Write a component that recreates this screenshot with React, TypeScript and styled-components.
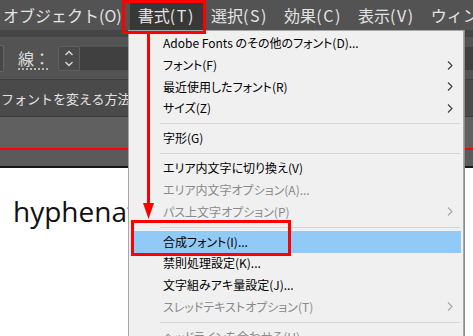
import styled, { createGlobalStyle } from "styled-components";

const GlobalStyle = createGlobalStyle`
  html, body { margin: 0; padding: 0; background: #fff; }
  body { font-family: "Noto Sans CJK JP", "Noto Sans", sans-serif; }
`;

const Screen = styled.div`
  position: relative;
  width: 473px;
  height: 336px;
  overflow: hidden;
  display: flex;
  flex-direction: column;
  background: #fff;
`;

const MenuBar = styled.div`
  display: flex;
  height: 30px;
  flex-shrink: 0;
  background: #535353;
  white-space: nowrap;
`;

const MenuTitle = styled.div<{ $active?: boolean }>`
  padding: 0 8px;
  line-height: 30px;
  font-size: 16px;
  color: #e4e4e4;
  background: ${(p) => (p.$active ? "#383838" : "transparent")};
  &:first-child { padding-left: 3px; }
`;

const AccessKey = styled.span`
  letter-spacing: 1.6px;
`;

const SubStrip = styled.div`
  height: 7px;
  flex-shrink: 0;
  background: #454545;
`;

const ControlBar = styled.div`
  height: 42px;
  flex-shrink: 0;
  display: flex;
  align-items: center;
  background: #535353;
  border-bottom: 1px solid #3e3e3e;
`;

const CutField = styled.div`
  width: 3px;
  height: 25px;
  background: #474747;
  border: 1px solid #666;
  border-left: none;
  border-radius: 0 2px 2px 0;
`;

const StrokeLabel = styled.span`
  margin-left: 14px;
  font-size: 16px;
  line-height: 1;
  color: #dcdcdc;
  text-decoration: underline dotted #cfcfcf;
  text-underline-offset: 4px;
`;

const Spinner = styled.div`
  margin-left: 8px;
  width: 22px;
  height: 25px;
  box-sizing: border-box;
  display: flex;
  align-items: center;
  justify-content: center;
  background: #4a4a4a;
  border: 1px solid #5f5f5f;
  border-radius: 2px;
`;

const Field = styled.div`
  flex: 1;
  height: 23px;
  background: #404040;
`;

const InfoRow = styled.div`
  height: 36px;
  flex-shrink: 0;
  display: flex;
  align-items: center;
  padding-left: 1px;
  background: #4a4a4a;
  border-bottom: 1px solid #3a3a3a;
  font-size: 13px;
  color: #e2e2e2;
  white-space: nowrap;
`;

const TabStrip = styled.div`
  height: 31px;
  flex-shrink: 0;
  background: #606060;
  border-bottom: 2px solid #ff0000;
`;

const TabFoot = styled.div`
  height: 16px;
  flex-shrink: 0;
  background: #5a5a5a;
  border-bottom: 2px solid #161616;
`;

const Canvas = styled.div`
  flex: 1;
  padding: 24px 0 0 13px;
  font-family: "Open Sans", "Noto Sans", sans-serif;
  font-size: 28px;
  color: #111;
`;

const Dropdown = styled.div`
  position: absolute;
  left: 128px;
  top: 30px;
  width: 336px;
  height: 330px;
  box-sizing: border-box;
  padding: 1.5px 2px 0 5px;
  background: #f0f0f0;
  border: 1px solid #a8a8a8;
  box-shadow: 1px 0 0 #8c8c8c;
  font-size: 12px;
  font-feature-settings: "palt" 1;
`;

const Item = styled.div<{ $disabled?: boolean; $hover?: boolean }>`
  height: 21.7px;
  display: flex;
  align-items: center;
  justify-content: space-between;
  padding: 0 8px 0 29px;
  line-height: 1;
  white-space: nowrap;
  color: ${(p) => (p.$disabled ? "#8a8a8a" : "#000")};
  background: ${(p) => (p.$hover ? "#91c9f7" : "transparent")};
`;

const Separator = styled.div`
  height: 1px;
  margin: 4px 1px 3.3px 26px;
  background: #d6d6d6;
`;

const CalloutBox = styled.div<{ $x: number; $y: number; $w: number; $h: number }>`
  position: absolute;
  left: ${(p) => p.$x}px;
  top: ${(p) => p.$y}px;
  width: ${(p) => p.$w}px;
  height: ${(p) => p.$h}px;
  box-sizing: border-box;
  border: 3px solid #ff0000;
`;

const ArrowSvg = styled.svg`
  position: absolute;
  left: 139px;
  top: 33px;
`;

const Chevron = ({ muted }: { muted?: boolean }) => (
  <svg width="6" height="9" viewBox="0 0 6 9">
    <polyline
      points="1,0.5 5,4.5 1,8.5"
      fill="none"
      stroke={muted ? "#a6a6a6" : "#3c3c3c"}
      strokeWidth="1.1"
    />
  </svg>
);

type Entry =
  | { sep: true }
  | { label: string; sub?: boolean; disabled?: boolean; hover?: boolean };

const entries: Entry[] = [
  { label: "Adobe Fonts のその他のフォント(D)..." },
  { label: "フォント(F)", sub: true },
  { label: "最近使用したフォント(R)", sub: true },
  { label: "サイズ(Z)", sub: true },
  { sep: true },
  { label: "字形(G)" },
  { sep: true },
  { label: "エリア内文字に切り換え(V)" },
  { label: "エリア内文字オプション(A)...", disabled: true },
  { label: "パス上文字オプション(P)", sub: true, disabled: true },
  { sep: true },
  { label: "合成フォント(I)...", hover: true },
  { label: "禁則処理設定(K)..." },
  { label: "文字組みアキ量設定(J)..." },
  { label: "スレッドテキストオプション(T)", sub: true, disabled: true },
  { sep: true },
  { label: "ヘッドラインを合わせる(H)", disabled: true },
];

const menus = [
  ["オブジェクト", "(O)"],
  ["書式", "(T)"],
  ["選択", "(S)"],
  ["効果", "(C)"],
  ["表示", "(V)"],
  ["ウィンドウ", "(W)"],
];

export default function App() {
  return (
    <Screen>
      <GlobalStyle />
      <MenuBar>
        {menus.map(([name, key], i) => (
          <MenuTitle key={name} $active={name === "書式"}>
            {name}
            {i === 0 ? key : <AccessKey>{key}</AccessKey>}
          </MenuTitle>
        ))}
      </MenuBar>
      <SubStrip />
      <ControlBar>
        <CutField />
        <StrokeLabel>線：</StrokeLabel>
        <Spinner>
          <svg width="10" height="19" viewBox="0 0 10 19">
            <polyline points="1.5,6 5,2.5 8.5,6" fill="none" stroke="#d8d8d8" strokeWidth="1.4" />
            <polyline points="1.5,13 5,16.5 8.5,13" fill="none" stroke="#d8d8d8" strokeWidth="1.4" />
          </svg>
        </Spinner>
        <Field />
      </ControlBar>
      <InfoRow>フォントを変える方法.</InfoRow>
      <TabStrip />
      <TabFoot />
      <Canvas>hyphenat</Canvas>

      <Dropdown>
        {entries.map((e, i) =>
          "sep" in e ? (
            <Separator key={i} />
          ) : (
            <Item key={i} $disabled={e.disabled} $hover={e.hover}>
              <span>{e.label}</span>
              {e.sub && <Chevron muted={e.disabled} />}
            </Item>
          )
        )}
      </Dropdown>

      <CalloutBox $x={122} $y={0} $w={84} $h={34} />
      <CalloutBox $x={131} $y={220} $w={160} $h={36} />
      <ArrowSvg width="20" height="190" viewBox="0 0 20 190">
        <line x1="9.5" y1="0" x2="9.5" y2="172" stroke="#ff0000" strokeWidth="3" />
        <polygon points="4,170 15,170 9.5,186" fill="#ff0000" />
      </ArrowSvg>
    </Screen>
  );
}
